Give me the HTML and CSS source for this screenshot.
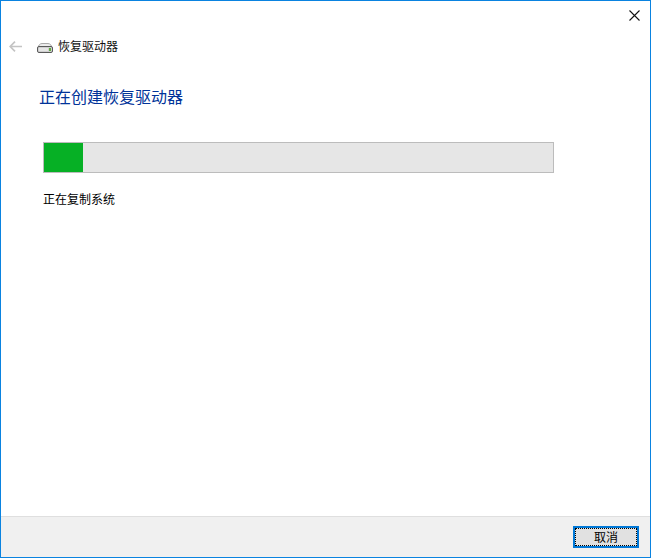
FILE: index.html
```html
<!DOCTYPE html>
<html lang="zh-CN">
<head>
    <meta charset="UTF-8">
    <title>恢复驱动器</title>
    <link rel="stylesheet" href="styles.css">
</head>
<body>
    <div class="window">
        <div class="titlebar">
            <svg class="close" width="11" height="11" viewBox="0 0 11 11">
                <path d="M0.5 0.5L10.5 10.5M10.5 0.5L0.5 10.5" stroke="#111" stroke-width="1.1" fill="none"/>
            </svg>
        </div>

        <div class="nav">
            <svg class="back" width="13" height="11" viewBox="0 0 13 11">
                <path d="M6 0.7L1.2 5.5L6 10.3M1.2 5.5H13" stroke="#c4c4c4" stroke-width="1.7" fill="none"/>
            </svg>
            <svg class="drive" width="16" height="10" viewBox="0 0 16 10">
                <path d="M1 5C1.5 2 3 0.5 5 0.5H11C13 0.5 14.5 2 15 5Z" fill="#ececec" stroke="#a8a8a8"/>
                <rect x="0.5" y="3.5" width="15" height="6" rx="1.5" fill="#cfcfcf" stroke="#5a5a5a"/>
                <rect x="2" y="5" width="9" height="3" fill="#e6e6e6"/>
                <rect x="12" y="5" width="2" height="3" fill="#5fae3c"/>
            </svg>
            <span class="nav-title">恢复驱动器</span>
        </div>

        <main>
            <h1>正在创建恢复驱动器</h1>
            <div class="progress">
                <div class="progress-fill" style="width: 39px"></div>
            </div>
            <p class="status">正在复制系统</p>
        </main>

        <footer>
            <button class="btn">取消</button>
        </footer>
    </div>
</body>
</html>
```

FILE: styles.css
```css
html, body {
    margin: 0;
    padding: 0;
}

body {
    font-family: "Noto Sans CJK SC", "Liberation Sans", sans-serif;
    background-color: #fff;
}

.window {
    display: flex;
    flex-direction: column;
    width: 651px;
    height: 558px;
    box-sizing: border-box;
    border: 1px solid #0a83e0;
    background: #fff;
}

.titlebar {
    display: flex;
    justify-content: flex-end;
    height: 30px;
    padding: 9px 10px 0 0;
    box-sizing: border-box;
}

.close {
    display: block;
}

.nav {
    display: flex;
    align-items: center;
    height: 30px;
    padding-left: 8px;
}

.back {
    margin-right: 15px;
}

.drive {
    margin: 4px 5px 0 0;
}

.nav-title {
    font-size: 12px;
    line-height: 16px;
    color: #111;
}

/* Main content */
main {
    flex: 1;
    padding: 0 0 0 38px;
}

h1 {
    margin: 25px 0 0;
    font-size: 16px;
    font-weight: normal;
    line-height: 20px;
    color: #003399;
}

.progress {
    width: 511px;
    height: 31px;
    margin: 36px 0 0 4px;
    box-sizing: border-box;
    border: 1px solid #bcbcbc;
    background: #e6e6e6;
}

.progress-fill {
    height: 100%;
    background: #06b025;
}

.status {
    margin: 18px 0 0 4px;
    font-size: 12px;
    line-height: 16px;
    color: #000;
}

/* Footer */
footer {
    display: flex;
    justify-content: flex-end;
    align-items: flex-start;
    height: 41px;
    padding: 9px 11px 0 0;
    box-sizing: border-box;
    border-top: 1px solid #dfdfdf;
    background: #f0f0f0;
}

.btn {
    position: relative;
    width: 66px;
    height: 22px;
    padding: 0;
    border: 2px solid #0078d7;
    background: #e1e1e1;
    font-family: inherit;
    font-size: 12px;
    line-height: 16px;
    color: #000;
}

.btn::after {
    content: "";
    position: absolute;
    top: 0;
    right: 0;
    bottom: 0;
    left: 0;
    border: 1px dotted #000;
}
```
